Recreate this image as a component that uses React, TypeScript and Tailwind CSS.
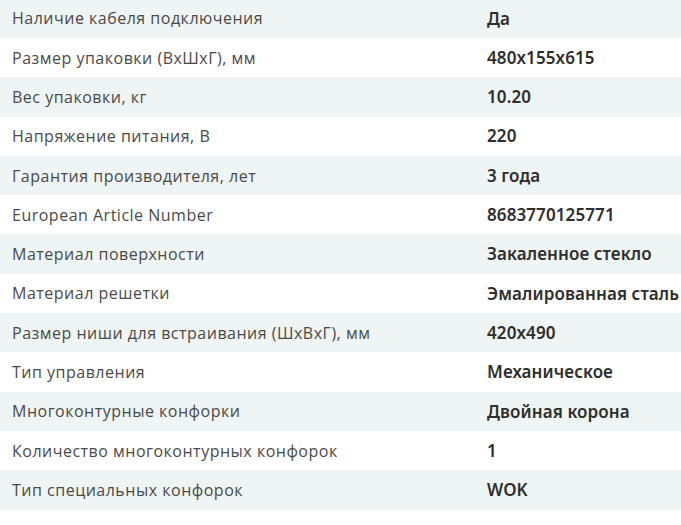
const specs: [string, string][] = [
  ["Наличие кабеля подключения", "Да"],
  ["Размер упаковки (ВхШхГ), мм", "480x155x615"],
  ["Вес упаковки, кг", "10.20"],
  ["Напряжение питания, В", "220"],
  ["Гарантия производителя, лет", "3 года"],
  ["European Article Number", "8683770125771"],
  ["Материал поверхности", "Закаленное стекло"],
  ["Материал решетки", "Эмалированная сталь"],
  ["Размер ниши для встраивания (ШхВхГ), мм", "420x490"],
  ["Тип управления", "Механическое"],
  ["Многоконтурные конфорки", "Двойная корона"],
  ["Количество многоконтурных конфорок", "1"],
  ["Тип специальных конфорок", "WOK"],
];

const App = () => {
  return (
    <div className="h-[525px] w-[681px] overflow-hidden bg-white">
      <div className="-mt-[1.3px]">
        {specs.map(([label, value], i) => (
          <div
            key={label}
            className={
              "flex h-[39.3px] items-center " +
              (i % 2 === 0 ? "bg-[#eff4f4]" : "bg-white")
            }
          >
            <div className="w-[487px] shrink-0 pl-3 font-['Open_Sans',sans-serif] text-[16px] tracking-[0.5px] text-[#4a4a4a]">
              {label}
            </div>
            <div className="whitespace-nowrap font-['Noto_Sans',sans-serif] text-[17px] font-semibold tracking-[0.1px] text-[#2e2e2e]">
              {value}
            </div>
          </div>
        ))}
      </div>
    </div>
  );
};

export default App;
